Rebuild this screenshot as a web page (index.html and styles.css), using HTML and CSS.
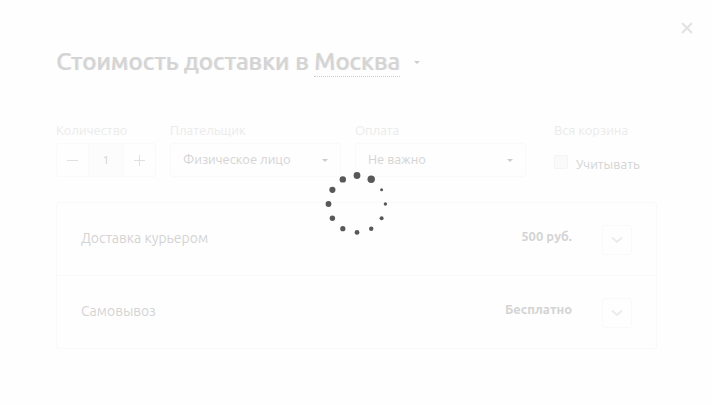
FILE: index.html
```html
<!DOCTYPE html>
<html lang="ru">
<head>
<meta charset="utf-8">
<meta name="viewport" content="width=device-width, initial-scale=1">
<title>Стоимость доставки</title>
<link rel="stylesheet" href="styles.css">
</head>
<body>
<main class="dialog" aria-busy="true">
  <button class="close" type="button" aria-label="Закрыть">
    <svg width="12" height="12" viewBox="0 0 12 12"><path d="M1 1l10 10M11 1L1 11"/></svg>
  </button>
  <h1 class="title">Стоимость доставки в <a class="city" href="#city">Москва</a><span class="caret"></span></h1>

  <form class="filters">
    <div class="field">
      <label class="label" for="qty">Количество</label>
      <div class="counter">
        <button class="step" type="button" aria-label="Меньше"><svg width="12" height="12" viewBox="0 0 12 12"><path d="M0 6.5h11"/></svg></button>
        <input class="qty" id="qty" type="text" value="1">
        <button class="step" type="button" aria-label="Больше"><svg width="12" height="12" viewBox="0 0 12 12"><path d="M0 6.5h11M5.5 1v11"/></svg></button>
      </div>
    </div>
    <div class="field">
      <label class="label" for="payer">Плательщик</label>
      <div class="select">
        <select id="payer"><option>Физическое лицо</option></select>
        <span class="caret"></span>
      </div>
    </div>
    <div class="field">
      <label class="label" for="payment">Оплата</label>
      <div class="select">
        <select id="payment"><option>Не важно</option></select>
        <span class="caret"></span>
      </div>
    </div>
    <div class="field field-cart">
      <span class="label">Вся корзина</span>
      <label class="check"><input type="checkbox"><span>Учитывать</span></label>
    </div>
  </form>

  <ul class="methods">
    <li class="method">
      <span class="name">Доставка курьером</span>
      <strong class="price">500 руб.</strong>
      <button class="expand" type="button" aria-label="Подробнее"><svg width="12" height="8" viewBox="0 0 12 8"><path d="M1 1.500L6 6l5-4.500"/></svg></button>
    </li>
    <li class="method">
      <span class="name">Самовывоз</span>
      <strong class="price">Бесплатно</strong>
      <button class="expand" type="button" aria-label="Подробнее"><svg width="12" height="8" viewBox="0 0 12 8"><path d="M1 1.500L6 6l5-4.500"/></svg></button>
    </li>
  </ul>
</main>

<div class="overlay" role="status" aria-label="Загрузка">
  <svg class="spinner" width="66" height="66" viewBox="0 0 66 66">
    <circle cx="33" cy="4.500" r="3.400"/>
    <circle cx="47.200" cy="8.300" r="3.700"/>
    <circle cx="57.600" cy="18.700" r="1.500"/>
    <circle cx="61.400" cy="33" r="1.700"/>
    <circle cx="57.600" cy="47.200" r="2"/>
    <circle cx="47.200" cy="57.700" r="2.200"/>
    <circle cx="33" cy="61.400" r="2.400"/>
    <circle cx="18.800" cy="57.700" r="2.600"/>
    <circle cx="8.400" cy="47.200" r="2.700"/>
    <circle cx="4.500" cy="33" r="2.900"/>
    <circle cx="8.400" cy="18.800" r="3.100"/>
    <circle cx="18.800" cy="8.400" r="3.200"/>
  </svg>
</div>
</body>
</html>
```

FILE: styles.css
```css
* {
  box-sizing: border-box;
}

body {
  margin: 0;
  background: #fefefe;
  color: #d4d4d4;
  font: 13px/20px Ubuntu, "Noto Sans", sans-serif;
}

button,
input,
select {
  margin: 0;
  padding: 0;
  border: 0;
  background: none;
  color: inherit;
  font: inherit;
}

svg {
  display: block;
  fill: none;
  stroke: currentColor;
}

.dialog {
  padding: 46px 56px 56px;
}

.close {
  position: absolute;
  top: 22px;
  right: 20px;
  color: #e2e2e2;
  stroke-width: 2;
}

.title {
  display: flex;
  align-items: center;
  margin: 0;
  font-size: 24px;
  font-weight: 500;
  line-height: 32px;
  text-shadow: 1px 0 #e6e6e6;
  white-space: pre;
}

.city {
  border-bottom: 1px dotted #cccccc;
  color: inherit;
  line-height: 28px;
  text-decoration: none;
}

.caret {
  border: solid transparent;
  border-width: 3px 3px 0;
  border-top-color: #cccccc;
}

.title .caret {
  margin-left: 14px;
}

.filters {
  display: grid;
  grid-template-columns: 100fr 171fr 171fr 117fr;
  column-gap: 14px;
  margin-top: 42px;
}

.field-cart {
  padding-left: 14px;
}

.label {
  display: block;
  margin-bottom: 3px;
  color: #ebebeb;
  white-space: nowrap;
}

.counter,
.select {
  display: grid;
  height: 34px;
  border: 1px solid #f9f9f9;
  border-radius: 3px;
}

.counter {
  grid-template-columns: 31px 1fr 31px;
}

.step {
  display: grid;
  place-items: center;
  color: #e0e0e0;
}

.qty {
  width: 100%;
  border: solid #f9f9f9;
  border-width: 0 1px;
  background: #fcfcfc;
  font-size: 12px;
  text-align: center;
}

.select {
  align-items: center;
}

.select select,
.select .caret {
  grid-area: 1 / 1;
}

.select select {
  width: 100%;
  height: 100%;
  padding: 0 24px 2px 12px;
  appearance: none;
}

.select .caret {
  justify-self: end;
  margin-right: 12px;
  pointer-events: none;
}

.check {
  display: flex;
  align-items: flex-start;
  gap: 8px;
  margin-top: 12px;
}

.check input {
  width: 14px;
  height: 14px;
  margin-top: 3px;
  border: 1px solid #f4f4f4;
  border-radius: 2px;
  background: #fafafa;
  appearance: none;
}

.check span {
  padding-top: 4px;
  line-height: 16px;
}

.methods {
  margin: 25px 0 0;
  padding: 0;
  border: 1px solid #f9f9f9;
  border-radius: 3px;
  list-style: none;
}

.method {
  display: flex;
  align-items: center;
  gap: 30px;
  padding: 22px 24px 20px;
}

.method + .method {
  border-top: 1px solid #f9f9f9;
}

.name {
  flex: 1;
  padding-bottom: 4px;
  font-size: 14px;
}

.price {
  padding-bottom: 8px;
}

.expand {
  display: grid;
  place-items: center;
  width: 30px;
  height: 30px;
  border: 1px solid #f9f9f9;
  border-radius: 3px;
  color: #ebebeb;
  stroke-width: 2;
}

.overlay {
  position: fixed;
  inset: 0;
  display: grid;
  place-items: center;
  padding-top: 2px;
}

.spinner {
  fill: #585858;
  stroke: none;
}
```
